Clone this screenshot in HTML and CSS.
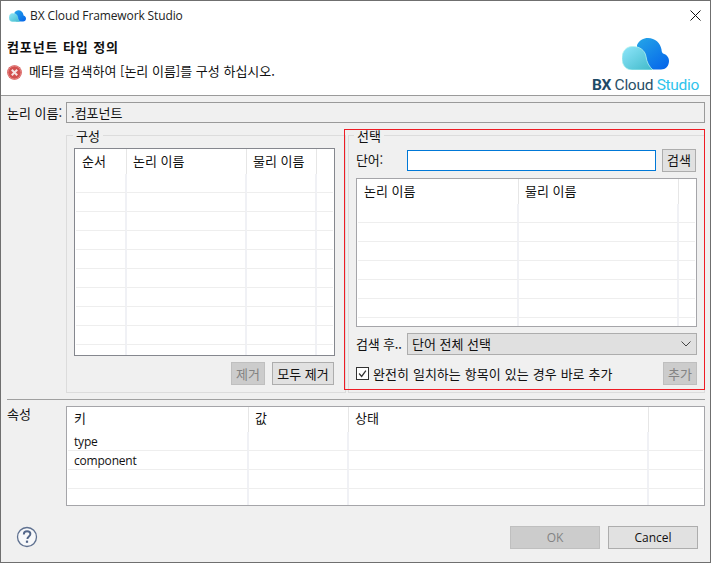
FILE: index.html
```html
<!DOCTYPE html>
<html lang="ko">
<head>
<meta charset="utf-8">
<title>BX Cloud Framework Studio</title>
<link rel="stylesheet" href="styles.css">
</head>
<body>
<svg class="defs" width="0" height="0" aria-hidden="true">
  <defs>
    <linearGradient id="gBack" x1="0.1" y1="0" x2="0.9" y2="1">
      <stop offset="0" stop-color="#23a3e8"/>
      <stop offset="1" stop-color="#0565ea"/>
    </linearGradient>
    <linearGradient id="gFront" x1="0" y1="0" x2="1" y2="1">
      <stop offset="0" stop-color="#8fe6fb"/>
      <stop offset="1" stop-color="#3fb9c9"/>
    </linearGradient>
    <symbol id="cloud" viewBox="0 0 47 32">
      <path fill="url(#gBack)" d="M15 7C17 2.500 21.500 0 26 0c7 0 12.500 5 13.500 11.500 0 1.500.500 3 1.500 4 3.500 1 6 3.500 6 7.500 0 5-3.500 8.500-8 8.500H20L15 25Z"/>
      <path fill="url(#gFront)" stroke="#b5f3ee" stroke-width=".8" d="M10 8.500c7-.5 13 3.500 14 10 .7 5.500 3 10 7 13.500H10C4 32 0 27 0 20.500 0 13.500 4 8.700 10 8.500Z"/>
    </symbol>
  </defs>
</svg>
<div class="window">
  <div class="titlebar">
    <svg class="title-icon"><use href="#cloud"/></svg>
    <span class="title-text">BX Cloud Framework Studio</span>
    <svg class="close" viewBox="0 0 11 11"><path d="M.5.500l10 10M10.500.500l-10 10" stroke="#111" stroke-width="1" fill="none"/></svg>
  </div>

  <header class="banner">
    <div class="banner-text">
      <div class="banner-title">컴포넌트 타입 정의</div>
      <div class="banner-msg">
        <svg class="err" viewBox="0 0 15 15">
          <circle cx="7.500" cy="7.500" r="7.300" fill="#d2504f"/>
          <circle cx="7.500" cy="7.500" r="6.500" fill="none" stroke="#e58583" stroke-width="1"/>
          <path d="M4.800 4.800l5.400 5.400M10.200 4.800l-5.400 5.400" stroke="#f6e4e4" stroke-width="2" fill="none"/>
        </svg>
        <span>메타를 검색하여 [논리 이름]를 구성 하십시오.</span>
      </div>
    </div>
    <div class="logo">
      <svg class="logo-cloud"><use href="#cloud"/></svg>
      <div class="logo-text"><b>BX</b> Cloud <span class="logo-studio">Studio</span></div>
    </div>
  </header>

  <main class="content">
    <div class="name-row">
      <span class="name-label">논리 이름:</span>
      <div class="name-input">.컴포넌트</div>
    </div>

    <div class="groups">
      <section class="group group-left">
        <span class="legend">구성</span>
        <div class="table table-left">
          <div class="row head"><span>순서</span><span>논리 이름</span><span>물리 이름</span><span></span></div>
          <div class="row"><span></span><span></span><span></span><span></span></div>
          <div class="row"><span></span><span></span><span></span><span></span></div>
          <div class="row"><span></span><span></span><span></span><span></span></div>
          <div class="row"><span></span><span></span><span></span><span></span></div>
          <div class="row"><span></span><span></span><span></span><span></span></div>
          <div class="row"><span></span><span></span><span></span><span></span></div>
          <div class="row"><span></span><span></span><span></span><span></span></div>
          <div class="row"><span></span><span></span><span></span><span></span></div>
          <div class="row"><span></span><span></span><span></span><span></span></div>
          <div class="row"><span></span><span></span><span></span><span></span></div>
        </div>
        <div class="actions">
          <button class="btn small disabled" type="button">제거</button>
          <button class="btn wide" type="button">모두 제거</button>
        </div>
      </section>

      <section class="group group-right">
        <span class="legend">선택</span>
        <div class="red-outline"></div>
        <div class="search-row">
          <span class="field-label">단어:</span>
          <div class="search-input"></div>
          <button class="btn small" type="button">검색</button>
        </div>
        <div class="table table-right">
          <div class="row head"><span>논리 이름</span><span>물리 이름</span><span></span></div>
          <div class="row"><span></span><span></span><span></span></div>
          <div class="row"><span></span><span></span><span></span></div>
          <div class="row"><span></span><span></span><span></span></div>
          <div class="row"><span></span><span></span><span></span></div>
          <div class="row"><span></span><span></span><span></span></div>
          <div class="row"><span></span><span></span><span></span></div>
          <div class="row"><span></span><span></span><span></span></div>
        </div>
        <div class="combo-row">
          <span class="field-label">검색 후..</span>
          <div class="combo">
            <span>단어 전체 선택</span>
            <svg class="chevron" viewBox="0 0 10 6"><path d="M.5.500l4.500 4.500 4.500-4.500" fill="none" stroke="#444" stroke-width="1"/></svg>
          </div>
        </div>
        <div class="check-row">
          <span class="checkbox">
            <svg viewBox="0 0 13 13"><path d="M2.500 6.500l3 3.500 5-7" fill="none" stroke="#333" stroke-width="1.500"/></svg>
          </span>
          <span class="check-label">완전히 일치하는 항목이 있는 경우 바로 추가</span>
          <button class="btn small disabled" type="button">추가</button>
        </div>
      </section>
    </div>

    <div class="separator"></div>

    <div class="props-row">
      <span class="name-label">속성</span>
      <div class="table table-props">
        <div class="row head"><span>키</span><span>값</span><span>상태</span><span></span></div>
        <div class="row"><span class="latin">type</span><span></span><span></span><span></span></div>
        <div class="row"><span class="latin">component</span><span></span><span></span><span></span></div>
        <div class="row"><span></span><span></span><span></span><span></span></div>
        <div class="row"><span></span><span></span><span></span><span></span></div>
      </div>
    </div>

    <footer class="footer">
      <svg class="help" viewBox="0 0 22 22">
        <circle cx="11" cy="11" r="9.500" fill="#f7f8fa" stroke="#5f7190" stroke-width="1.300"/>
        <path d="M7.800 8.500c0-2 1.400-3.200 3.300-3.200 2 0 3.300 1.200 3.300 2.800 0 2.400-3 2.500-3 4.900" fill="none" stroke="#54678a" stroke-width="1.900"/>
        <rect x="9.900" y="14.600" width="2.200" height="2.200" fill="#54678a"/>
      </svg>
      <div class="footer-buttons">
        <button class="btn dialog disabled" type="button">OK</button>
        <button class="btn dialog" type="button">Cancel</button>
      </div>
    </footer>
  </main>
</div>
</body>
</html>
```

FILE: styles.css
```css
* { box-sizing: border-box; }

html, body {
  margin: 0;
  padding: 0;
  background: #f0f0f0;
}

body {
  font-family: "Noto Sans CJK KR", "Open Sans", sans-serif;
  font-size: 13px;
  line-height: 18px;
  color: #111;
  overflow: hidden;
}

.defs { position: absolute; }

.window {
  width: 711px;
  height: 563px;
  border: 1px solid #6f6f6f;
  background: #f0f0f0;
  display: flex;
  flex-direction: column;
  overflow: hidden;
}

.titlebar {
  height: 30px;
  flex: none;
  background: #fff;
  display: flex;
  align-items: center;
  padding: 0 10px 0 8px;
}

.title-icon { width: 17px; height: 12px; }

.title-text {
  margin-left: 4px;
  font-family: "Open Sans", sans-serif;
  font-size: 12px;
  letter-spacing: -0.12px;
  color: #222;
  flex: 1;
}

.close { width: 11px; height: 11px; margin-top: -1px; margin-right: -1px; }

.banner {
  height: 65px;
  flex: none;
  background: #fff;
  border-bottom: 1px solid #9a9a9a;
  display: flex;
  justify-content: space-between;
  padding-left: 6px;
  padding-right: 11px;
}

.banner-text { padding-top: 7px; }

.banner-title { font-weight: 700; letter-spacing: 0.9px; }

.banner-msg {
  margin-top: 6px;
  display: flex;
  align-items: center;
}

.err { width: 15px; height: 15px; margin-right: 7px; margin-top: 2px; }

.logo {
  display: flex;
  flex-direction: column;
  align-items: center;
  padding-top: 7px;
}

.logo-cloud { width: 47px; height: 32px; margin-right: -1px; }

.logo-text {
  font-family: Roboto, sans-serif;
  font-size: 15.500px;
  line-height: 18px;
  margin-top: 6px;
  color: #2a5068;
  letter-spacing: -0.3px;
  white-space: nowrap;
}

.logo-text b { color: #1e4a66; font-weight: 700; }

.logo-studio { color: #2fc3ec; }

.content {
  flex: 1;
  display: flex;
  flex-direction: column;
  padding: 6px 5px 0 6px;
}

.name-row {
  display: flex;
  align-items: center;
  height: 21px;
}

.name-label { width: 59px; flex: none; }

.name-input {
  flex: 1;
  height: 21px;
  border: 1px solid #9a9a9a;
  background: #f0f0f0;
  padding-left: 4px;
  line-height: 19px;
}

.groups {
  display: flex;
  gap: 2px;
  margin-top: 12px;
  margin-left: 59px;
}

.group {
  position: relative;
  height: 258px;
  border: 1px solid #dcdcdc;
  padding-left: 7px;
  padding-right: 7px;
}

.group-left { width: 280px; padding-top: 12px; padding-right: 11px; }
.group-right { width: 357px; padding-top: 13px; }

.legend {
  position: absolute;
  top: -9px;
  left: 6px;
  padding: 0 3px 0 3px;
  background: #f0f0f0;
}

.group-right .legend { left: 5px; }

.red-outline {
  position: absolute;
  top: -7px;
  left: -5px;
  width: 361px;
  height: 261px;
  border: 1px solid #ee1c25;
  pointer-events: none;
}

.table {
  background: #fff;
  border: 1px solid #a5a5a9;
  padding: 0 1px;
  overflow: hidden;
}

.table-left { width: 261px; height: 208px; border-color: #85878e; }
.table-right { width: 341px; height: 149px; margin-top: 7px; }
.table-props { flex: 1; height: 100px; }

.row {
  display: grid;
  height: 19px;
  grid-auto-rows: 100%;
}

.table-left .row { grid-template-columns: 51px 120px 70px 1fr; }
.table-right .row { grid-template-columns: 161px 160px 1fr; }
.table-props .row { grid-template-columns: 181px 100px 300px 1fr; }

.row span {
  border-right: 2px solid #f0f1f5;
  border-bottom: 1px solid #eeeeee;
  padding-left: 6px;
  line-height: 18px;
  white-space: nowrap;
}

.row span:last-child { border-right: 0; }

.row.head { height: 25px; }

.row.head span {
  border-right: 1px solid #e6e6e6;
  border-bottom: 0;
  line-height: 24px;
}

.row.head span:last-child { border-right: 0; }

.table-props .row.head span { line-height: 22px; }

.row .latin {
  font-family: "Open Sans", sans-serif;
  font-size: 12px;
  letter-spacing: -0.2px;
  line-height: 20px;
}

.table-props .row span { padding-left: 6px; }

.btn {
  font: inherit;
  color: #111;
  background: #e1e1e1;
  border: 1px solid #adadad;
  padding: 0;
  height: 23px;
  line-height: 20px;
  flex: none;
}

.btn.small { width: 34px; }
.btn.wide { width: 62px; }
.btn.dialog {
  width: 90px;
  font-family: "Open Sans", sans-serif;
  font-size: 12px;
}

.btn.disabled {
  background: #cccccc;
  border-color: #bfbfbf;
  color: #838383;
}

.actions {
  display: flex;
  justify-content: flex-end;
  gap: 7px;
  margin-top: 6px;
}

.search-row {
  display: flex;
  align-items: center;
  height: 22px;
}

.field-label {
  width: 51px;
  flex: none;
  white-space: nowrap;
  letter-spacing: -0.2px;
}

.search-input {
  width: 249px;
  height: 21px;
  background: #fff;
  border: 1px solid #0078d7;
  margin-right: 6px;
}

.combo-row {
  display: flex;
  align-items: center;
  margin-top: 6px;
  height: 22px;
}

.combo {
  flex: 1;
  height: 22px;
  background: #e0e0e0;
  border: 1px solid #adadad;
  padding: 0 5px 0 4px;
  display: flex;
  align-items: center;
  justify-content: space-between;
}

.chevron { width: 10px; height: 6px; }

.check-row {
  display: flex;
  align-items: center;
  margin-top: 7px;
  height: 23px;
}

.checkbox {
  width: 13px;
  height: 13px;
  border: 1px solid #333;
  background: #fff;
  flex: none;
  display: flex;
  margin-right: 4px;
}

.checkbox svg { width: 11px; height: 11px; }

.check-label { flex: 1; white-space: nowrap; word-spacing: 0.4px; }

.separator {
  height: 1px;
  background: #a0a0a0;
  margin-top: 6px;
}

.props-row {
  display: flex;
  align-items: flex-start;
  margin-top: 6px;
}

.props-row .name-label { margin-top: -1px; }

.footer {
  display: flex;
  justify-content: space-between;
  align-items: center;
  margin-top: 20px;
  padding-left: 9px;
}

.help { width: 22px; height: 22px; margin-top: -2px; }

.footer-buttons {
  display: flex;
  gap: 8px;
  margin-right: 7px;
}
```
